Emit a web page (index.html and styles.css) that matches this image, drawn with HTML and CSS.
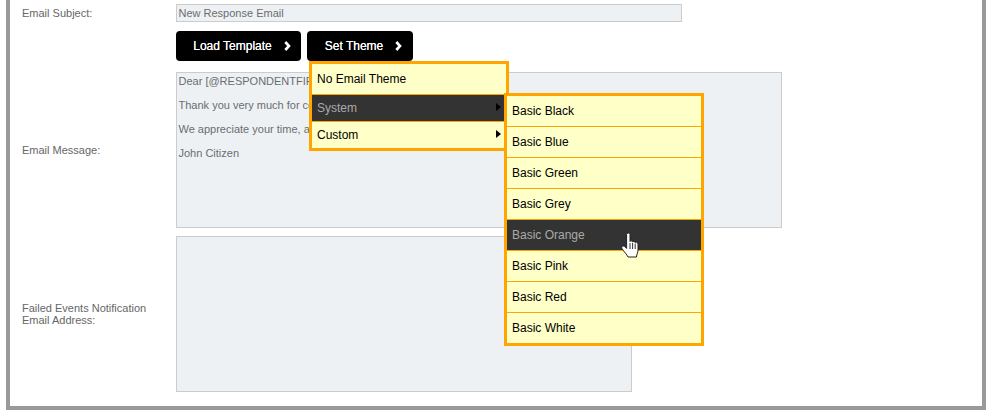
FILE: index.html
```html
<!DOCTYPE html>
<html>
<head>
  <meta charset="utf-8">
  <title>Email settings</title>
  <link rel="stylesheet" href="styles.css">
</head>
<body>
<div class="frame">
  <div class="row row--subject">
    <label class="row__label">Email Subject:</label>
    <div class="field field--subject">New Response Email</div>
  </div>

  <div class="row row--buttons">
    <span class="row__label"></span>
    <div class="btns">
      <button class="btn btn--load">Load Template
        <svg class="btn__chev" width="7" height="10" viewBox="0 0 7 10"><path d="M1.3 1 L5 5 L1.3 9" fill="none" stroke="#fff" stroke-width="2.6"/></svg>
      </button>
      <div class="theme">
        <button class="btn btn--theme">Set Theme
          <svg class="btn__chev" width="7" height="10" viewBox="0 0 7 10"><path d="M1.3 1 L5 5 L1.3 9" fill="none" stroke="#fff" stroke-width="2.6"/></svg>
        </button>

        <ul class="menu menu--main">
          <li class="menu__item menu__item--first">No Email Theme</li>
          <li class="menu__item menu__item--short menu__item--active menu__item--sub">System</li>
          <li class="menu__item menu__item--short menu__item--sub">Custom</li>
        </ul>

        <ul class="menu menu--sub">
          <li class="menu__item">Basic Black</li>
          <li class="menu__item">Basic Blue</li>
          <li class="menu__item">Basic Green</li>
          <li class="menu__item">Basic Grey</li>
          <li class="menu__item menu__item--active">Basic Orange</li>
          <li class="menu__item">Basic Pink</li>
          <li class="menu__item">Basic Red</li>
          <li class="menu__item">Basic White</li>
        </ul>

        <svg class="cursor" width="19" height="26" viewBox="0 0 19 26">
          <path d="M5.6 2.4 C5.6 0.6 9 0.6 9 2.4 L9 9.5 C9.4 8.4 11.4 8.6 11.6 10 C12 9 14 9.2 14.2 10.6 C14.6 9.8 17 10 17 12 L17 18 C17 20.5 15.8 22 15.4 25 L7 25 C6 22.5 3 20 0.9 16.4 C0 14.4 2.4 13.2 3.8 14.6 L5.6 16.4 Z" fill="#fff" stroke="#222" stroke-width="1"/>
          <path d="M9 11 V17 M11.6 11 V17 M14.2 11.5 V17" fill="none" stroke="#333" stroke-width="1"/>
        </svg>
      </div>
    </div>
  </div>

  <div class="row row--message">
    <label class="row__label">Email Message:</label>
    <div class="field field--message">
      <p>Dear [@RESPONDENTFIRSTNAME],</p>
      <p>Thank you very much for completing our survey.</p>
      <p>We appreciate your time, and your feedback.</p>
      <p>John Citizen</p>
    </div>
  </div>

  <div class="row row--failed">
    <label class="row__label">Failed Events Notification<br>Email Address:</label>
    <div class="field field--failed"></div>
  </div>
</div>
</body>
</html>
```

FILE: styles.css
```css
* {
	box-sizing: border-box;
}

body {
	margin: 0;
	background: #fff;
	font-family: "Liberation Sans", Arial, sans-serif;
	font-size: 11px;
	color: #666;
	overflow: hidden;
}

.frame {
	width: 980px;
	height: 410px;
	margin-left: 6px;
	padding: 4px 0 0 12px;
	border: 4px solid #999;
	border-top: 0;
}

.row {
	display: flex;
	align-items: center;
}

.row__label {
	width: 154px;
	flex: none;
	line-height: 12px;
}

.row--buttons {
	margin-top: 9px;
}

.row--message {
	margin-top: 11px;
}

.row--failed {
	margin-top: 8px;
}

.field {
	background: #eef1f4;
	border: 1px solid #ccc;
	color: #6a6d70;
	padding: 1px 1.5px;
}

.field--subject {
	width: 506px;
	height: 18px;
	line-height: 15px;
}

.field--message {
	width: 606px;
	height: 156px;
	padding-top: 2px;
}

.field--message p {
	margin: 0 0 11px;
	line-height: 13px;
}

.field--failed {
	width: 456px;
	height: 156px;
}

.btns {
	display: flex;
	gap: 6px;
}

.btn {
	display: flex;
	align-items: center;
	justify-content: center;
	height: 30px;
	padding: 0 0 0 7px;
	border: 0;
	border-radius: 4px;
	background: #000;
	color: #fff;
	font: 12px "Liberation Sans", Arial, sans-serif;
	text-shadow: 0 0 0.5px #fff;
}

.btn__chev {
	margin-left: 12px;
}

.btn--load {
	width: 125px;
}

.btn--theme {
	width: 106px;
}

.theme {
	position: relative;
}

.menu {
	position: absolute;
	margin: 0;
	padding: 0;
	list-style: none;
	width: 200px;
	border: 3px solid #ffa500;
	background: #ffffc8;
	color: #000;
	font-size: 12px;
	z-index: 2;
}

.menu--main {
	left: 2px;
	top: 30px;
}

.menu--sub {
	left: 197px;
	top: 62px;
}

.menu__item {
	position: relative;
	height: 31px;
	padding-left: 5px;
	line-height: 30px;
	border-bottom: 1px solid #ffa500;
}

.menu__item:last-child {
	height: 30px;
	border-bottom: 0;
}

.menu__item--short {
	height: 27px;
	line-height: 26px;
}

.menu__item--short:last-child {
	height: 26px;
}

.menu__item--active {
	background: #333;
	color: #aaa;
}

.menu__item--sub::after {
	content: "";
	position: absolute;
	right: 5px;
	top: 8px;
	border-left: 5px solid #000;
	border-top: 4px solid transparent;
	border-bottom: 4px solid transparent;
}

.cursor {
	position: absolute;
	left: 314px;
	top: 201px;
	z-index: 3;
}
```
